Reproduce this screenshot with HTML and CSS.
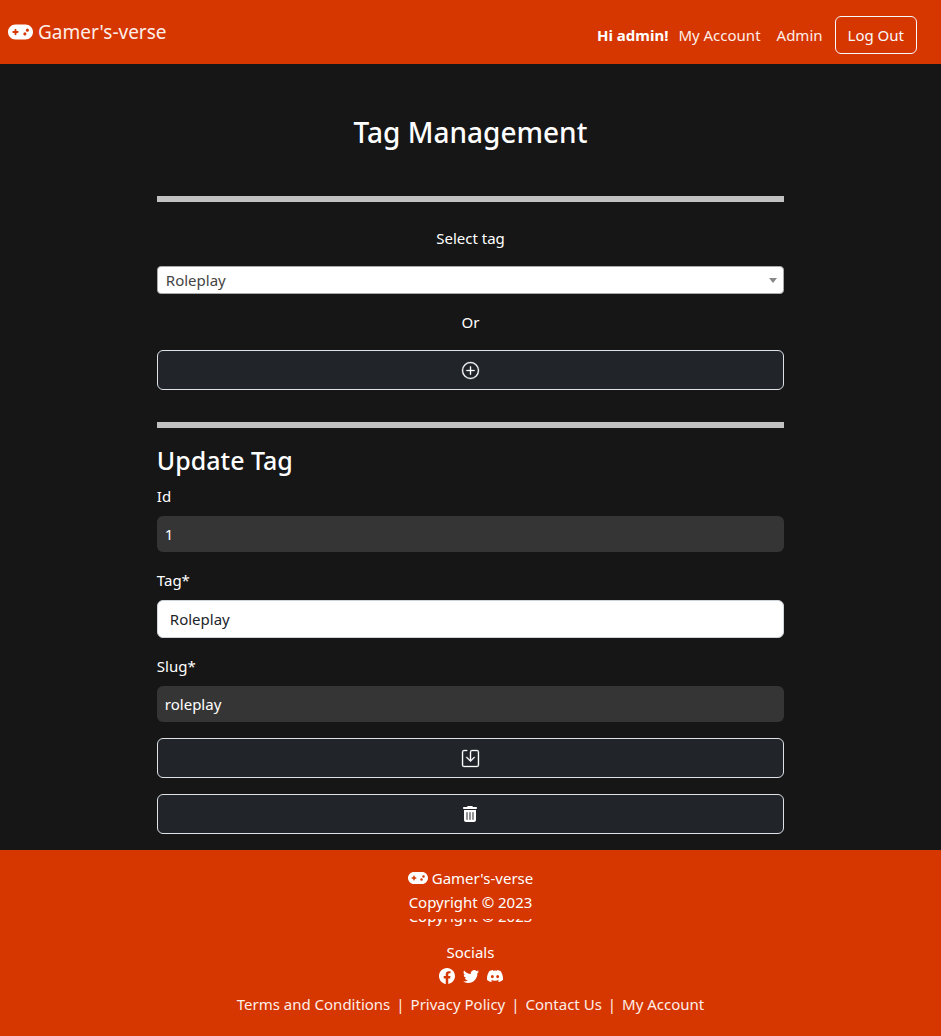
FILE: index.html
```
<!DOCTYPE html>
<html lang="en">
<head>
<meta charset="utf-8">
<meta name="viewport" content="width=device-width, initial-scale=1">
<title>Gamer's-verse - Tag Management</title>
<link rel="stylesheet" href="styles.css">
</head>
<body>
<svg class="sprite" aria-hidden="true">
  <symbol id="gamepad" viewBox="0 0 640 512"><path d="M192 64C86 64 0 150 0 256S86 448 192 448H448c106 0 192-86 192-192s-86-192-192-192H192zM496 168a40 40 0 1 1 0 80 40 40 0 1 1 0-80zM392 304a40 40 0 1 1 80 0 40 40 0 1 1 -80 0zM168 200c0-13.3 10.7-24 24-24s24 10.7 24 24v32h32c13.3 0 24 10.7 24 24s-10.7 24-24 24H216v32c0 13.3-10.7 24-24 24s-24-10.7-24-24V280H136c-13.3 0-24-10.7-24-24s10.7-24 24-24h32V200z"/></symbol>
</svg>
<header class="navbar">
  <a class="brand" href="#"><svg class="brand-icon" aria-hidden="true"><use href="#gamepad"/></svg>Gamer's-verse</a>
  <nav class="nav">
    <strong class="greeting">Hi admin!</strong>
    <a class="nav-link" href="#">My Account</a>
    <a class="nav-link" href="#">Admin</a>
    <button class="logout" type="button">Log Out</button>
  </nav>
</header>
<main class="content">
  <h1 class="title">Tag Management</h1>
  <hr class="rule">
  <section class="picker">
    <label for="tag-select">Select tag</label>
    <div class="select-wrap">
      <select class="select" id="tag-select"><option>Roleplay</option></select>
      <svg class="caret" viewBox="0 0 8 5" aria-hidden="true"><path d="M0 0h8L4 5z"/></svg>
    </div>
    <p class="or">Or</p>
    <button class="action" type="button" aria-label="Add tag">
      <svg class="icon" viewBox="0 0 16 16" aria-hidden="true"><path d="M8 15A7 7 0 1 1 8 1a7 7 0 0 1 0 14zm0 1A8 8 0 1 0 8 0a8 8 0 0 0 0 16z"/><path d="M8 4a.5.5 0 0 1 .5.5v3h3a.5.5 0 0 1 0 1h-3v3a.5.5 0 0 1-1 0v-3h-3a.5.5 0 0 1 0-1h3v-3A.5.5 0 0 1 8 4z"/></svg>
    </button>
  </section>
  <hr class="rule">
  <form class="form">
    <h2 class="subtitle">Update Tag</h2>
    <div class="field">
      <label for="id">Id</label>
      <input class="input input-locked" id="id" type="text" value="1" readonly>
    </div>
    <div class="field">
      <label for="tag">Tag*</label>
      <input class="input" id="tag" type="text" value="Roleplay">
    </div>
    <div class="field">
      <label for="slug">Slug*</label>
      <input class="input input-locked" id="slug" type="text" value="roleplay" readonly>
    </div>
    <button class="action" type="button" aria-label="Save tag">
      <svg class="icon" viewBox="0 0 16 16" aria-hidden="true"><path d="M2 1a1 1 0 0 0-1 1v12a1 1 0 0 0 1 1h12a1 1 0 0 0 1-1V2a1 1 0 0 0-1-1H9.5a1 1 0 0 0-1 1v7.293l2.646-2.647a.5.5 0 0 1 .708.708l-3.5 3.5a.5.5 0 0 1-.708 0l-3.5-3.5a.5.5 0 1 1 .708-.708L7.5 9.293V2a2 2 0 0 1 2-2H14a2 2 0 0 1 2 2v12a2 2 0 0 1-2 2H2a2 2 0 0 1-2-2V2a2 2 0 0 1 2-2h2.5a.5.5 0 0 1 0 1H2z"/></svg>
    </button>
    <button class="action" type="button" aria-label="Delete tag">
      <svg class="trash" viewBox="0 0 448 512" aria-hidden="true"><path d="M135.2 17.7C140.6 6.8 151.7 0 163.8 0H284.2c12.1 0 23.2 6.8 28.6 17.7L320 32h96c17.7 0 32 14.3 32 32s-14.3 32-32 32H32C14.3 96 0 81.7 0 64S14.3 32 32 32h96l7.2-14.3zM32 128H416V448c0 35.3-28.7 64-64 64H96c-35.3 0-64-28.7-64-64V128zm96 64c-8.8 0-16 7.2-16 16V432c0 8.8 7.2 16 16 16s16-7.2 16-16V208c0-8.8-7.2-16-16-16zm96 0c-8.8 0-16 7.2-16 16V432c0 8.8 7.2 16 16 16s16-7.2 16-16V208c0-8.8-7.2-16-16-16zm96 0c-8.8 0-16 7.2-16 16V432c0 8.8 7.2 16 16 16s16-7.2 16-16V208c0-8.8-7.2-16-16-16z"/></svg>
    </button>
  </form>
</main>
<footer class="footer">
  <div class="footer-brand"><svg class="footer-icon" aria-hidden="true"><use href="#gamepad"/></svg>Gamer's-verse</div>
  <div>Copyright © 2023</div>
  <div class="echo" aria-hidden="true">Copyright © 2023</div>
  <div class="socials-title">Socials</div>
  <div class="socials">
    <a href="#" aria-label="Facebook"><svg class="social" viewBox="0 0 16 16" aria-hidden="true"><path d="M16 8.049c0-4.446-3.582-8.05-8-8.05C3.58 0-.002 3.603-.002 8.05c0 4.017 2.926 7.347 6.75 7.951v-5.625h-2.03V8.05H6.75V6.275c0-2.017 1.195-3.131 3.022-3.131.876 0 1.791.157 1.791.157v1.98h-1.009c-.993 0-1.303.621-1.303 1.258v1.51h2.218l-.354 2.326H9.25V16c3.824-.604 6.75-3.934 6.75-7.951z"/></svg></a>
    <a href="#" aria-label="Twitter"><svg class="social" viewBox="0 0 16 16" aria-hidden="true"><path d="M5.026 15c6.038 0 9.341-5.003 9.341-9.334 0-.14 0-.282-.006-.422A6.685 6.685 0 0 0 16 3.542a6.658 6.658 0 0 1-1.889.518 3.301 3.301 0 0 0 1.447-1.817 6.533 6.533 0 0 1-2.087.793A3.286 3.286 0 0 0 7.875 6.03a9.325 9.325 0 0 1-6.767-3.429 3.289 3.289 0 0 0 1.018 4.382A3.323 3.323 0 0 1 .64 6.575v.045a3.288 3.288 0 0 0 2.632 3.218 3.203 3.203 0 0 1-.865.115 3.23 3.23 0 0 1-.614-.057 3.283 3.283 0 0 0 3.067 2.277A6.588 6.588 0 0 1 .78 13.58a6.32 6.32 0 0 1-.78-.045A9.344 9.344 0 0 0 5.026 15z"/></svg></a>
    <a href="#" aria-label="Discord"><svg class="social" viewBox="0 0 16 16" aria-hidden="true"><path d="M13.545 2.907a13.227 13.227 0 0 0-3.257-1.011.05.05 0 0 0-.052.025c-.141.25-.297.577-.406.833a12.19 12.19 0 0 0-3.658 0 8.258 8.258 0 0 0-.412-.833.051.051 0 0 0-.052-.025c-1.125.194-2.22.534-3.257 1.011a.041.041 0 0 0-.021.018C.356 6.024-.213 9.047.066 12.032c.001.014.01.028.021.037a13.276 13.276 0 0 0 3.995 2.02.05.05 0 0 0 .056-.019c.308-.42.582-.863.818-1.329a.05.05 0 0 0-.028-.07 8.735 8.735 0 0 1-1.248-.595.05.05 0 0 1-.005-.085c.084-.063.168-.129.248-.195a.05.05 0 0 1 .051-.007c2.619 1.196 5.454 1.196 8.041 0a.052.052 0 0 1 .053.007c.08.066.164.132.248.195a.051.051 0 0 1-.004.085c-.399.233-.813.44-1.249.594a.05.05 0 0 0-.027.07c.24.466.514.909.817 1.329a.05.05 0 0 0 .056.019 13.235 13.235 0 0 0 4.001-2.02.049.049 0 0 0 .021-.037c.334-3.451-.559-6.449-2.366-9.106a.034.034 0 0 0-.02-.019zM5.347 10.214c-.789 0-1.438-.724-1.438-1.612 0-.889.637-1.613 1.438-1.613.807 0 1.45.73 1.438 1.613 0 .888-.637 1.612-1.438 1.612zm5.316 0c-.788 0-1.438-.724-1.438-1.612 0-.889.637-1.613 1.438-1.613.807 0 1.451.73 1.438 1.613 0 .888-.631 1.612-1.438 1.612z"/></svg></a>
  </div>
  <nav class="footer-links">
    <a href="#">Terms and Conditions</a><span>|</span><a href="#">Privacy Policy</a><span>|</span><a href="#">Contact Us</a><span>|</span><a href="#">My Account</a>
  </nav>
</footer>
</body>
</html>
```

FILE: styles.css
```
* { box-sizing: border-box; }

body {
  margin: 0;
  min-height: 100vh;
  display: flex;
  flex-direction: column;
  background: #161616;
  color: #fff;
  font: 15px/24px "Segoe UI", "Noto Sans", "Open Sans", sans-serif;
}

a { color: inherit; text-decoration: none; }
svg { fill: currentColor; display: block; }
button, input, select { font: inherit; color: inherit; }
.sprite { position: absolute; width: 0; height: 0; }

.navbar {
  display: flex;
  align-items: center;
  justify-content: space-between;
  min-height: 64px;
  padding: 8px 24px 8px 8px;
  background: #d63600;
}
.brand { display: flex; align-items: center; gap: 5px; font-size: 19px; color: #fdeee9; }
.brand-icon { width: 25px; height: 20px; color: #fff; }
.nav { display: flex; align-items: center; padding-top: 6px; }
.greeting { margin-right: 10px; }
.nav-link { margin-right: 16px; color: #fdeee9; }
.nav-link + .nav-link { margin-right: 12px; }
.logout {
  height: 38px;
  padding: 0 12px;
  border: 1px solid #f8f9fa;
  border-radius: 6px;
  background: transparent;
  color: #f8f9fa;
}

.content { width: 66.667%; margin: 0 auto; padding-bottom: 16px; }
.title {
  margin: 50px 0 46px;
  font-size: 28px;
  line-height: 36px;
  font-weight: 500;
  text-align: center;
}
.rule { margin: 0; height: 6px; border: 0; background: #c0c1c0; }

.picker {
  display: flex;
  flex-direction: column;
  gap: 16px;
  padding: 24px 0 32px;
  text-align: center;
}
.select-wrap { position: relative; }
.select {
  display: block;
  width: 100%;
  height: 28px;
  padding: 0 24px 0 8px;
  appearance: none;
  border: 1px solid #aaa;
  border-radius: 4px;
  background: #fff;
  color: #444;
}
.caret { position: absolute; right: 7px; top: 12px; width: 8px; height: 5px; color: #888; }
.or { margin: 0; }

.action {
  display: flex;
  align-items: center;
  justify-content: center;
  width: 100%;
  height: 40px;
  padding: 0;
  border: 1px solid #dee2e6;
  border-radius: 6px;
  background: #212529;
}
.icon { width: 17px; height: 17px; overflow: visible; stroke: currentColor; stroke-width: 0.3; }
.trash { width: 14px; height: 16px; }

.form { display: flex; flex-direction: column; gap: 16px; padding-top: 16px; }
.subtitle { margin: 0 0 -8px; font-size: 25px; line-height: 32px; font-weight: 500; }
.field { display: flex; flex-direction: column; gap: 8px; }
.input {
  width: 100%;
  height: 38px;
  padding: 0 12px;
  border: 1px solid #ced4da;
  border-radius: 6px;
  background: #fff;
  color: #212529;
}
.input-locked { height: 36px; padding: 0 8px; border: 0; background: #353535; color: #fff; }

.footer {
  flex: 1;
  display: flex;
  flex-direction: column;
  align-items: center;
  padding: 16px 16px 20px;
  background: #d63600;
  text-align: center;
}
.footer-brand { display: flex; align-items: center; gap: 4px; }
.footer-icon { width: 20px; height: 16px; }
/* Cropped repeat of the copyright line: only the lower edge shows */
.echo { display: flex; align-items: flex-end; height: 9px; margin-top: 5px; overflow: hidden; }
.socials-title { margin-top: 12px; }
.socials { display: flex; align-items: center; gap: 8px; height: 24px; margin-bottom: 4px; }
.social { width: 16px; height: 16px; }
.footer-links { display: flex; flex-wrap: wrap; justify-content: center; gap: 6px; color: #fdeee9; }
```
